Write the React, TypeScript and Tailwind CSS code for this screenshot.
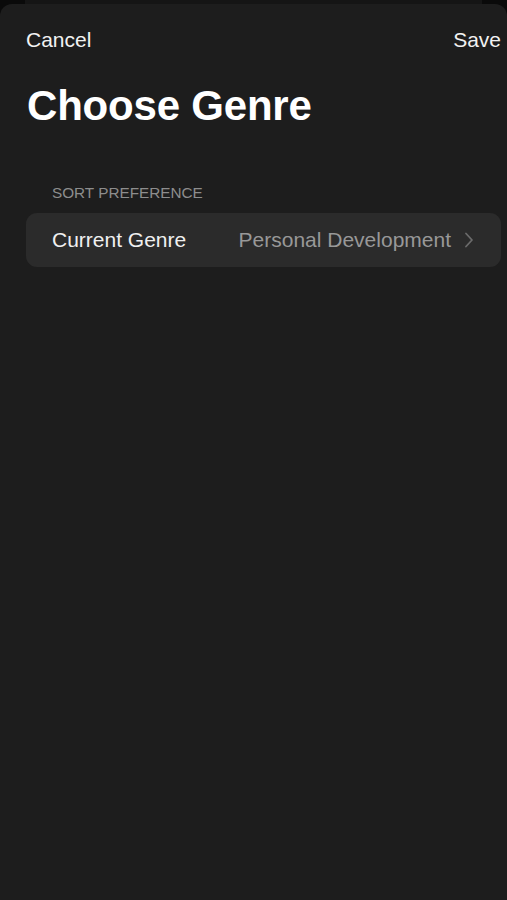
import React, { FC } from 'react';

const Chevron: FC = () => (
  <svg width="10" height="16" viewBox="0 0 10 16" fill="none" className="ml-[13px]">
    <path d="M2 1.5L8 8L2 14.5" stroke="#6b6b6b" strokeWidth="1.8" strokeLinecap="round" strokeLinejoin="round" />
  </svg>
);

const App: FC = () => {
  return (
    <div className="flex h-[900px] w-full flex-col bg-[#0a0a0a] font-['Liberation_Sans',Arial,sans-serif]">
      {/* card peeking behind the sheet */}
      <div className="h-[4px] px-[25px]">
        <div className="h-full bg-[#151515]" />
      </div>

      <div className="flex flex-1 flex-col rounded-t-[12px] bg-[#1d1d1d] pl-[26px] pr-[6px]">
        <div className="flex h-[74px] items-center justify-between pb-[2px]">
          <button className="text-[21px] text-[#f2f2f2]">Cancel</button>
          <button className="text-[21px] text-[#f2f2f2]">Save</button>
        </div>

        <h1 className="pl-[1px] text-[42px] font-bold leading-[56px] tracking-[-0.2px] text-white">Choose Genre</h1>

        <div className="mt-[49px] pl-[26px] text-[15.3px] leading-[20px] text-[#8d8d8d]">SORT PREFERENCE</div>

        <div className="mt-[10px] flex h-[54px] items-center justify-between rounded-[11px] bg-[#2b2b2b] pl-[26px] pr-[27px]">
          <span className="text-[21px] text-[#f0f0f0]">Current Genre</span>
          <div className="flex items-center">
            <span className="text-[21px] text-[#989898]">Personal Development</span>
            <Chevron />
          </div>
        </div>
      </div>
    </div>
  );
};

export default App;
